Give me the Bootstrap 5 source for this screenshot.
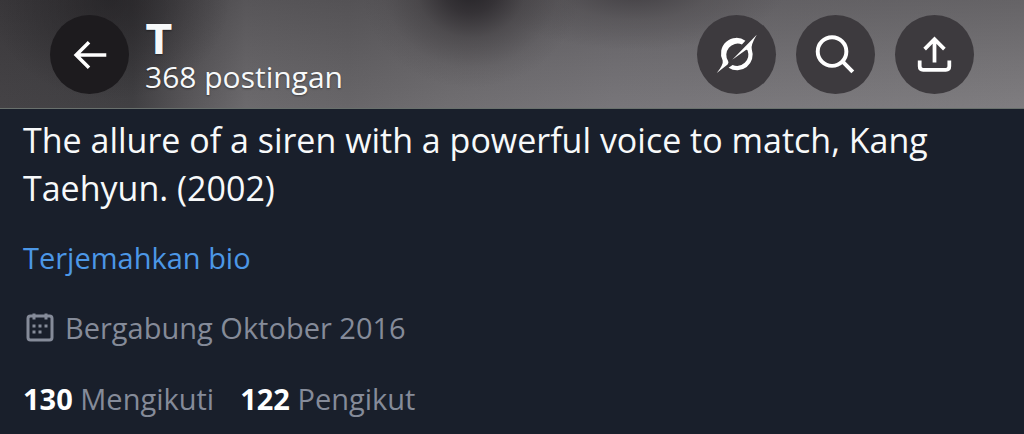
<!DOCTYPE html>
<html lang="id">
<head>
<meta charset="utf-8">
<meta name="viewport" content="width=device-width, initial-scale=1">
<title>T</title>
<link href="https://cdn.jsdelivr.net/npm/bootstrap@5.3.0/dist/css/bootstrap.min.css" rel="stylesheet">
<style>
body{background:#191f2b;color:#f7f9fa;font-family:"Open Sans","Noto Sans",sans-serif;font-size:29px;line-height:40px}
.banner{padding:15px 50px 14px;border-bottom:1px solid #69706c;
background:
radial-gradient(ellipse 110px 100px at 46% -12px,#252327 0,#2b282ccc 25%,#39363977 50%,#45424522 80%,#45424500 100%),
radial-gradient(ellipse 150px 60px at 62% -10px,#3c393dcc 0,#4b484b66 50%,#4b484b00 100%),
radial-gradient(ellipse 120px 100px at 110px 0,#1d1b1e88 0,#2d2b2e00 100%),
linear-gradient(180deg,#19171a40 0,#19171a18 60%,#19171a00 100%),
linear-gradient(90deg,#454346 0,#414043 13%,#575558 18%,#6c6a6d 24%,#686669 34%,#706e71 44%,#78767a 60%,#7f7d80 100%)}
.round-btn{width:79px;height:79px;border-radius:50%;background:#3d3a3e;border:0;padding:0;color:#fff}
.round-btn.back-btn{background:#1d1b1e}
.round-btn svg{display:block;width:100%;height:100%}
.tools{gap:20px}
.titles{margin-left:16px;padding-top:2px;text-shadow:0 1px 2px #0006}
.titles h1{font-family:Inter,"Open Sans",sans-serif;font-size:41px;line-height:42px;font-weight:800}
.titles p{font-size:30px;line-height:34px}
.profile{padding:7px 23px 16px}
.bio{font-size:34px;line-height:48px;margin-bottom:26px}
.translate{color:#4c97e6}
.facts{gap:31px;margin-top:30px}
.muted{color:#858b99}
.stats{gap:26px}
.stats a{color:#858b99}
.stats strong{color:#fff}
.cal{width:32px;height:32px}
.joined{gap:10px}
</style>
</head>
<body>
<header class="banner d-flex align-items-center">
<button class="round-btn back-btn flex-shrink-0" type="button" aria-label="Kembali">
<svg viewBox="0 0 80 80" fill="none" stroke="currentColor" stroke-width="3.600"><path d="M57 40.500H27M39.500 27.500L26.500 40.500L39.500 53.500"/></svg></button>
<div class="titles flex-grow-1"><h1 class="m-0">T</h1><p class="m-0">368 postingan</p></div>
<div class="tools d-flex">
<button class="round-btn" type="button" aria-label="Grok">
<svg viewBox="0 0 80 80" fill="currentColor"><path d="M49 26A15.700 15.700 0 0 0 26 46Q27 50 20 58.700L31 50Q32.500 48.500 31.500 46.700A11.500 11.500 0 0 1 45.500 29.800Z"/><path d="M60.500 20L35.700 45.300L49.500 35.500Q50.800 34.500 51.300 36.200A11.500 11.500 0 0 1 36 50.600L32 53.300A15.700 15.700 0 0 0 55.500 35Q54 31 60.500 20Z"/></svg></button>
<button class="round-btn" type="button" aria-label="Cari">
<svg viewBox="0 0 80 80" fill="none" stroke="currentColor" stroke-width="4"><circle cx="36.500" cy="37" r="14.500"/><path d="M47 47L57.500 57.500"/></svg></button>
<button class="round-btn" type="button" aria-label="Bagikan">
<svg viewBox="0 0 80 80" fill="none" stroke="currentColor" stroke-width="3.800"><path d="M40 48V25M30 34.500L40 24.500L50 34.500M25 46V52Q25 55.500 28.500 55.500H51.500Q55 55.500 55 52V46"/></svg></button>
</div>
</header>
<main class="profile">
<p class="bio">The allure of a siren with a powerful voice to match, Kang Taehyun. (2002)</p>
<a class="translate text-decoration-none d-block" href="#">Terjemahkan bio</a>
<div class="facts d-flex flex-column">
<div class="joined muted d-flex align-items-center">
<svg class="cal" viewBox="0 0 32 32" fill="none" stroke="currentColor" stroke-width="3"><rect x="5" y="4" width="24" height="24" rx="2.500"/><path d="M11 1.500V7.500M23 1.500V7.500"/><path d="M9.500 14h3M15.500 14h3M21.500 14h3M9.500 20h3M15.500 20h3"/></svg>
<span>Bergabung Oktober 2016</span></div>
<div class="stats d-flex flex-wrap"><a class="text-decoration-none" href="#"><strong>130</strong> Mengikuti</a><a class="text-decoration-none" href="#"><strong>122</strong> Pengikut</a></div>
</div>
</main>
<script src="https://cdn.jsdelivr.net/npm/bootstrap@5.3.0/dist/js/bootstrap.bundle.min.js"></script>
</body>
</html>
